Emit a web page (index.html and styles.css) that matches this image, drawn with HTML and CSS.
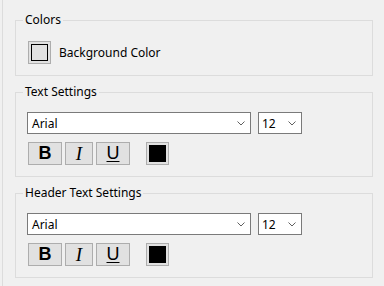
FILE: index.html
```html
<!DOCTYPE html>
<html lang="en">
<head>
    <meta charset="UTF-8">
    <title>Settings</title>
    <link rel="stylesheet" href="styles.css">
</head>
<body>
    <div class="panel">

        <!-- Colors -->
        <fieldset class="group">
            <legend>Colors</legend>
            <div class="group-body color-row">
                <div class="swatch"><span class="swatch-inner light"></span></div>
                <span>Background Color</span>
            </div>
        </fieldset>

        <!-- Text Settings -->
        <fieldset class="group">
            <legend>Text Settings</legend>
            <div class="group-body">
                <div class="combo-row">
                    <div class="combo font">
                        <span>Arial</span>
                        <svg width="8" height="5" viewBox="0 0 8 5"><path d="M0.5 0.5 L4 4 L7.5 0.5" fill="none" stroke="#606060" stroke-width="1"/></svg>
                    </div>
                    <div class="combo size">
                        <span>12</span>
                        <svg width="8" height="5" viewBox="0 0 8 5"><path d="M0.5 0.5 L4 4 L7.5 0.5" fill="none" stroke="#606060" stroke-width="1"/></svg>
                    </div>
                </div>
                <div class="btn-row">
                    <button class="style-btn bold">B</button>
                    <button class="style-btn italic">I</button>
                    <button class="style-btn under">U</button>
                    <div class="swatch color-btn"><span class="swatch-inner dark"></span></div>
                </div>
            </div>
        </fieldset>

        <!-- Header Text Settings -->
        <fieldset class="group">
            <legend>Header Text Settings</legend>
            <div class="group-body">
                <div class="combo-row">
                    <div class="combo font">
                        <span>Arial</span>
                        <svg width="8" height="5" viewBox="0 0 8 5"><path d="M0.5 0.5 L4 4 L7.5 0.5" fill="none" stroke="#606060" stroke-width="1"/></svg>
                    </div>
                    <div class="combo size">
                        <span>12</span>
                        <svg width="8" height="5" viewBox="0 0 8 5"><path d="M0.5 0.5 L4 4 L7.5 0.5" fill="none" stroke="#606060" stroke-width="1"/></svg>
                    </div>
                </div>
                <div class="btn-row">
                    <button class="style-btn bold">B</button>
                    <button class="style-btn italic">I</button>
                    <button class="style-btn under">U</button>
                    <div class="swatch color-btn"><span class="swatch-inner dark"></span></div>
                </div>
            </div>
        </fieldset>

    </div>
</body>
</html>
```
FILE: styles.css
```css
html, body {
    margin: 0;
    height: 100%;
}
body {
    background-color: #f0f0f0;
    font-family: "Noto Sans", "Open Sans", sans-serif;
    font-size: 12px;
    color: #000;
    overflow: hidden;
}
.panel {
    margin-left: 2px;
    height: 100%;
    border-left: 1px solid #dcdcdc;
    padding: 12px 0 0 12px;
    box-sizing: border-box;
}
.group {
    width: 358px;
    box-sizing: border-box;
    margin: 0 0 8px 0;
    padding: 0;
    border: 1px solid #dcdcdc;
}
.group legend {
    margin-left: 7px;
    padding: 0 2px;
    line-height: 16px;
    height: 16px;
}
.group-body {
    padding: 12px 0 11px 11px;
}
.color-row {
    display: flex;
    align-items: center;
    gap: 8px;
    padding: 13px 0 11px 12px;
}
.swatch {
    width: 23px;
    height: 23px;
    box-sizing: border-box;
    border: 1px solid #adadad;
    background-color: #e1e1e1;
    padding: 2px;
}
.swatch-inner {
    display: block;
    width: 100%;
    height: 100%;
    box-sizing: border-box;
    border: 1px solid #000;
}
.swatch-inner.light {
    background-color: #e1e1e1;
}
.swatch-inner.dark {
    background-color: #000;
}
.combo-row {
    display: flex;
    gap: 7px;
}
.combo {
    height: 22px;
    box-sizing: border-box;
    border: 1px solid #7a7a7a;
    background-color: #fff;
    display: flex;
    align-items: center;
    justify-content: space-between;
    padding: 0 5px 0 4px;
}
.combo svg {
    margin-top: 1px;
}
.combo.font {
    width: 224px;
}
.combo.size {
    width: 44px;
    padding-left: 3px;
}
.btn-row {
    display: flex;
    align-items: center;
    margin: 8px 0 0 1px;
}
.style-btn {
    height: 23px;
    box-sizing: border-box;
    border: 1px solid #adadad;
    background-color: #e1e1e1;
    padding: 0;
    margin: 0 3px 0 0;
    color: #000;
    line-height: 21px;
    font-size: 18px;
}
.bold {
    width: 34px;
    font-family: "Liberation Sans", Arial, sans-serif;
    font-weight: 900;
}
.italic {
    width: 28px;
    font-family: "Liberation Serif", "Times New Roman", serif;
    font-style: italic;
    font-size: 19px;
}
.under {
    width: 34px;
    font-family: "Liberation Sans", Arial, sans-serif;
    text-decoration: underline;
    text-underline-offset: 2px;
}
.color-btn {
    margin-left: 13px;
}
```
